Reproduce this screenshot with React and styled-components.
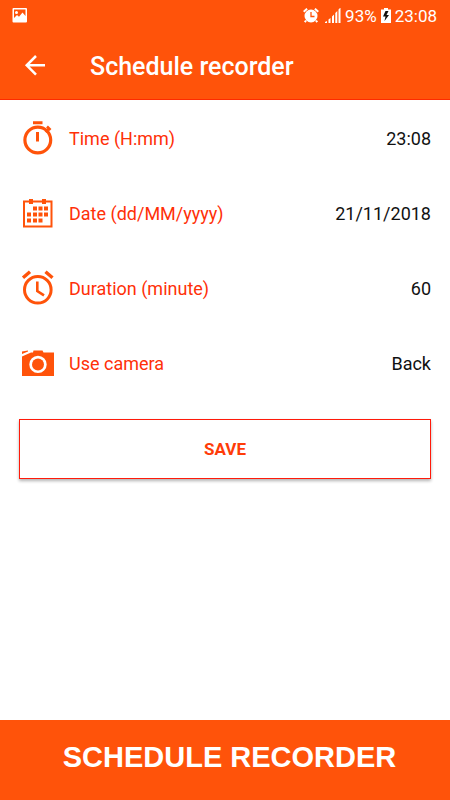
import { useState } from "react";
import styled, { createGlobalStyle } from "styled-components";

const GlobalStyle = createGlobalStyle`
  * {
    box-sizing: border-box;
  }

  body {
    margin: 0;
    background-color: #ffffff;
    font-family: Roboto, "Liberation Sans", sans-serif;
  }
`;

const Screen = styled.div`
  display: flex;
  flex-direction: column;
  min-height: 100vh;
`;

const Header = styled.header`
  background-color: #ff530a;
  border-bottom: 1px solid #ff2a00;
  color: #ffffff;
`;

const StatusBar = styled.div`
  display: flex;
  align-items: center;
  justify-content: space-between;
  height: 32px;
  padding: 0 13px 0 12px;
  font-size: 17px;
  line-height: 20px;
`;

const StatusGroup = styled.div`
  display: flex;
  align-items: center;
  gap: ${({ $gap }) => $gap}px;
`;

const Toolbar = styled.div`
  display: flex;
  align-items: center;
  gap: 44px;
  height: 67px;
  padding: 0 24px;
`;

const BackButton = styled.button`
  display: flex;
  padding: 0;
  border: none;
  background: none;
  color: inherit;
  cursor: pointer;
`;

const Title = styled.h1`
  margin: 0;
  padding-top: 2px;
  font-size: 25px;
  font-weight: 500;
  line-height: 32px;
`;

const Form = styled.form`
  display: flex;
  flex-direction: column;
  padding: 0 19px 24px;
`;

const Row = styled.div`
  display: flex;
  align-items: center;
  height: 75px;
  color: #ff530a;
`;

const RowIcon = styled.svg`
  flex: none;
  width: 38px;
  height: 38px;
  margin-right: 12px;
`;

const Label = styled.label`
  flex: none;
  padding-top: 2px;
  color: #ff3008;
  font-size: 18px;
  line-height: 24px;
`;

const Field = styled.input`
  flex: 1;
  min-width: 0;
  padding: 2px 0 0;
  border: none;
  outline: none;
  background: none;
  color: #111111;
  font-family: inherit;
  font-size: 18px;
  line-height: 24px;
  text-align: right;
`;

const Picker = styled(Field)`
  appearance: none;
  text-align-last: right;
`;

const SaveButton = styled.button`
  height: 60px;
  margin-top: 19px;
  border: 1px solid #ff1a0a;
  background-color: #ffffff;
  box-shadow: 0 2px 3px rgba(0, 0, 0, 0.3);
  color: #ff3c08;
  font-family: inherit;
  font-size: 17px;
  font-weight: 700;
  cursor: pointer;
`;

const Banner = styled.footer`
  margin-top: auto;
  padding: 19px 16px 25px 25px;
  background-color: #ff530a;
  color: #ffffff;
  font-family: "Liberation Sans", Arial, sans-serif;
  font-size: 29px;
  font-weight: 700;
  line-height: 36px;
  text-align: center;
`;

const PictureIcon = () => (
  <svg width='16' height='16' viewBox='0 0 16 16' aria-hidden='true'>
    <path
      fill='#ffffff'
      fillRule='evenodd'
      d='M1.5 0h12.5a1 1 0 0 1 1 1v12.500a1 1 0 0 1-1 1H1.500a1 1 0 0 1-1-1V1a1 1 0 0 1 1-1zM2 1.500v8.500l3-3 2 1.800 3.500-4.300 3 3.500V1.500z'
    />
    <circle cx='4.500' cy='4.500' r='1.500' fill='#ffffff' />
  </svg>
);

const AlarmStatusIcon = () => (
  <svg width='16' height='16' viewBox='0 0 16 16' aria-hidden='true'>
    <circle cx='8' cy='8' r='6.500' fill='#ffffff' />
    <path
      d='M0.700 3.700l3.400-3M11.900 0.700l3.400 3M3 12.500l-1.200 1.700M13 12.500l1.200 1.700'
      stroke='#ffffff'
      strokeWidth='2'
    />
    <path d='M8 4v4.500h3.500' fill='none' stroke='#ff530a' strokeWidth='1.300' />
  </svg>
);

const SignalIcon = () => (
  <svg width='16' height='16' viewBox='0 0 16 16' aria-hidden='true'>
    <path
      fill='#ffffff'
      d='M0 15v-1l2-1v2zM3.500 15v-3.500l2-1.500v5zM7 15V8.500l2-2V15zM10.300 15V5l2-2v12zM13.500 15V1.500l2-2V15z'
    />
  </svg>
);

const BatteryIcon = () => (
  <svg width='10' height='16' viewBox='0 0 10 16' aria-hidden='true'>
    <path fill='#ffffff' d='M3 0h4v1.500h3v13.500H0V1.500h3z' />
    <path fill='#111111' d='M4.500 3L2 8.500h2.500l-1 4.500L8 7H5.500L7.500 3z' />
  </svg>
);

const BackIcon = () => (
  <svg width='22' height='22' viewBox='0 0 22 22' aria-hidden='true'>
    <path
      d='M12 1L2.700 10.300l9.300 9.300M2.500 10.300H21'
      fill='none'
      stroke='#ffffff'
      strokeWidth='2.500'
    />
  </svg>
);

const StopwatchIcon = () => (
  <RowIcon viewBox='0 0 38 38' aria-hidden='true'>
    <circle cx='18.800' cy='21' r='12.900' fill='none' stroke='currentColor' strokeWidth='3.200' />
    <path fill='currentColor' d='M14 2.300h9.500v3H14zM17 13h3v9.500h-3z' />
    <path d='M26.500 13l3.500-3.500M28 7.500l3.500 3.500' stroke='currentColor' strokeWidth='2.600' />
  </RowIcon>
);

const CalendarIcon = () => (
  <RowIcon viewBox='0 0 38 38' aria-hidden='true'>
    <path d='M5 7.500h27.500v25H5z' fill='none' stroke='currentColor' strokeWidth='2' />
    <path
      fill='currentColor'
      d='M10 5h4v5h-4zM23 5h4v5h-4zM14 12.500h4v4h-4zM19.500 12.500h4v4h-4zM25 12.500h4v4h-4zM8 18.500h4v4H8zM14 18.500h4v4h-4zM19.500 18.500h4v4h-4zM25 18.500h4v4h-4zM8 24.500h4v4H8zM14 24.500h4v4h-4zM19.500 24.500h4v4h-4z'
    />
  </RowIcon>
);

const AlarmIcon = () => (
  <RowIcon viewBox='0 0 38 38' aria-hidden='true'>
    <circle cx='18.800' cy='20.800' r='13.300' fill='none' stroke='currentColor' strokeWidth='3' />
    <path
      d='M4 8.800l7-6M26.500 2.800l7 6'
      fill='none'
      stroke='currentColor'
      strokeWidth='3.400'
    />
    <path
      d='M18.300 12.500v9.500l6.700 4.300'
      fill='none'
      stroke='currentColor'
      strokeWidth='2.600'
    />
  </RowIcon>
);

const CameraIcon = () => (
  <RowIcon viewBox='0 0 38 38' aria-hidden='true'>
    <path
      fill='currentColor'
      fillRule='evenodd'
      d='M3 12.500l9-4h2l0.500-2h9l1 2H35v23.500H3zM19 11.700a8.700 8.700 0 1 0 0 17.400a8.700 8.700 0 1 0 0-17.400z'
    />
    <path fill='currentColor' d='M3 7.500l6-1v1L3 10z' />
    <circle cx='19' cy='20.400' r='6' fill='currentColor' />
  </RowIcon>
);

export default function App() {
  const [time, setTime] = useState("23:08");
  const [date, setDate] = useState("21/11/2018");
  const [duration, setDuration] = useState("60");
  const [camera, setCamera] = useState("Back");

  return (
    <Screen>
      <GlobalStyle />
      <Header>
        <StatusBar>
          <PictureIcon />
          <StatusGroup $gap={4}>
            <StatusGroup $gap={6}>
              <AlarmStatusIcon />
              <SignalIcon />
            </StatusGroup>
            <span>93%</span>
            <BatteryIcon />
            <span>23:08</span>
          </StatusGroup>
        </StatusBar>
        <Toolbar>
          <BackButton type='button' aria-label='Go back'>
            <BackIcon />
          </BackButton>
          <Title>Schedule recorder</Title>
        </Toolbar>
      </Header>

      <Form onSubmit={(e) => e.preventDefault()}>
        <Row>
          <StopwatchIcon />
          <Label htmlFor='time'>Time (H:mm)</Label>
          <Field id='time' value={time} onChange={(e) => setTime(e.target.value)} />
        </Row>
        <Row>
          <CalendarIcon />
          <Label htmlFor='date'>Date (dd/MM/yyyy)</Label>
          <Field id='date' value={date} onChange={(e) => setDate(e.target.value)} />
        </Row>
        <Row>
          <AlarmIcon />
          <Label htmlFor='duration'>Duration (minute)</Label>
          <Field
            id='duration'
            inputMode='numeric'
            value={duration}
            onChange={(e) => setDuration(e.target.value)}
          />
        </Row>
        <Row>
          <CameraIcon />
          <Label htmlFor='camera'>Use camera</Label>
          <Picker
            as='select'
            id='camera'
            value={camera}
            onChange={(e) => setCamera(e.target.value)}
          >
            <option>Back</option>
            <option>Front</option>
          </Picker>
        </Row>
        <SaveButton type='submit'>SAVE</SaveButton>
      </Form>

      <Banner>SCHEDULE RECORDER</Banner>
    </Screen>
  );
}
